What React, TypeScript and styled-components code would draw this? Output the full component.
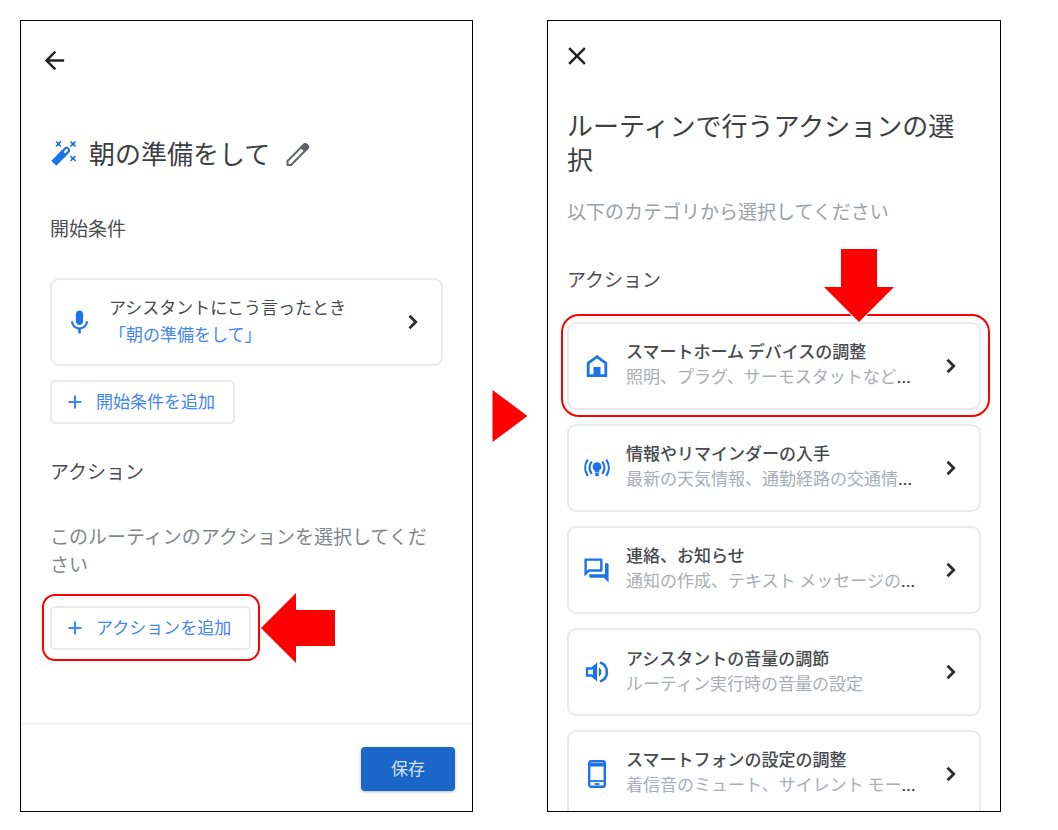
import React from "react";
import styled, { createGlobalStyle } from "styled-components";
import {
  MdArrowBack,
  MdClose,
  MdMic,
  MdOutlineForum,
} from "react-icons/md";

const GlobalStyle = createGlobalStyle`
  *, *::before, *::after { box-sizing: border-box; }
  body {
    margin: 0;
    background: #fff;
    font-family: "Noto Sans CJK JP", "Noto Sans", sans-serif;
    color: #3c4043;
  }
  h1, h2, p, ul { margin: 0; padding: 0; font-weight: 400; }
  ul { list-style: none; }
  button { font: inherit; color: inherit; cursor: pointer; }
  svg { display: block; flex: none; }
`;

const Page = styled.main`
  display: grid;
  grid-template-columns: minmax(0, 453fr) 74px minmax(0, 454fr);
  padding: 20px 57px 18px 20px;
  height: 100vh;
  min-height: 720px;
`;

const Panel = styled.section<{ $pad: string }>`
  display: flex;
  flex-direction: column;
  min-width: 0;
  min-height: 0;
  overflow: hidden;
  border: 1px solid #000;
  padding: ${(p) => p.$pad};
`;

const PanelBody = styled.div`
  padding: 0 29px;
`;

const NextStep = styled.div`
  display: flex;
  align-items: center;
  justify-content: center;
`;

const IconButton = styled.button`
  display: flex;
  align-items: center;
  justify-content: center;
  flex: none;
  width: 30px;
  height: 30px;
  padding: 0;
  border: 0;
  background: none;
  color: #202124;
`;

const BackButton = styled(IconButton)`
  margin-left: 18px;
`;

const CloseButton = styled(IconButton)`
  margin-left: -5px;
`;

const TitleRow = styled.div`
  display: flex;
  align-items: center;
  margin-top: 61px;
  color: #1a73e8;
`;

const Title = styled.h1`
  font-size: 26px;
  line-height: 34px;
  color: #3c4043;
`;

const RoutineName = styled(Title)`
  margin: 0 13px 0 11px;
`;

const PickerTitle = styled(Title)`
  margin-top: 37px;
  padding-right: 16px;
`;

const EditButton = styled(IconButton)`
  color: #5f6368;
`;

const Heading = styled.h2<{ $top: number }>`
  margin-top: ${(p) => p.$top}px;
  font-size: 19px;
  line-height: 28px;
  color: #4a4d51;
`;

const Note = styled.p<{ $top: number; $light?: boolean }>`
  margin-top: ${(p) => p.$top}px;
  font-size: 19px;
  line-height: 28px;
  color: ${(p) => (p.$light ? "#9aa0a6" : "#80868b")};
`;

const Card = styled.button`
  display: flex;
  align-items: center;
  width: 100%;
  height: 88px;
  padding: 0 21px 0 13px;
  border: 2px solid #e8eaed;
  border-radius: 9px;
  background: #fff;
  text-align: left;
  color: #1a73e8;
`;

const CardIcon = styled.span`
  display: flex;
  justify-content: center;
  flex: none;
  width: 29px;
  margin-right: 15px;
`;

const CardText = styled.span<{ $line: number }>`
  display: block;
  flex: 1;
  min-width: 0;
  padding-bottom: 4px;
  font-size: 17px;
  line-height: ${(p) => p.$line}px;
  white-space: nowrap;
`;

const CardTitle = styled.span<{ $strong?: boolean }>`
  display: block;
  font-weight: ${(p) => (p.$strong ? 500 : 400)};
  color: #474a4e;
`;

const CardPhrase = styled.span`
  display: block;
  color: #4285f4;
`;

const CardSub = styled.span`
  display: block;
  color: #a9aeb4;
`;

const Dots = styled.span`
  font-family: Roboto, sans-serif;
  font-weight: 500;
  color: #3c4043;
`;

const AddButton = styled.button`
  display: flex;
  align-items: center;
  gap: 14px;
  height: 44px;
  padding: 0 18px 0 16px;
  border: 2px solid #e8eaed;
  border-radius: 5px;
  background: #fff;
  font-size: 17px;
  color: #4285f4;
  white-space: nowrap;
`;

const ButtonLabel = styled.span`
  display: block;
  padding-bottom: 3px;
`;

const AddRow = styled.div<{ $top: number }>`
  display: flex;
  margin-top: ${(p) => p.$top}px;
`;

const Marked = styled.div`
  position: relative;
`;

const Ring = styled.span<{ $inset: string; $radius: number }>`
  position: absolute;
  inset: ${(p) => p.$inset};
  border: 2px solid #f00;
  border-radius: ${(p) => p.$radius}px;
  pointer-events: none;
`;

const LeftArrow = styled.svg`
  position: absolute;
  left: calc(100% + 8px);
  top: -16px;
`;

const DownArrow = styled.svg`
  position: absolute;
  right: 86px;
  bottom: calc(100% - 1px);
`;

const Footer = styled.footer`
  display: flex;
  justify-content: flex-end;
  margin-top: auto;
  padding: 22px 17px 20px;
  border-top: 2px solid #f3f4f5;
  box-shadow: 0 -1px 2px #f8f8f8;
`;

const SaveButton = styled.button`
  width: 94px;
  height: 44px;
  padding: 0;
  border: 0;
  border-radius: 4px;
  background: #1a66c9;
  box-shadow: 0 1px 3px #b4b8bf;
  font-size: 17px;
  color: #d3e2f8;
`;

const ActionList = styled.ul`
  display: flex;
  flex-direction: column;
  gap: 14px;
  margin-top: 29px;
`;

const Chevron = () => (
  <svg width="14" height="18" viewBox="0 0 14 18" fill="none" stroke="#2b2d30" strokeWidth="2.8" aria-hidden="true">
    <path d="M3.500 2.800 9.700 9l-6.200 6.200" />
  </svg>
);

const Plus = () => (
  <svg width="14" height="14" viewBox="0 0 14 14" fill="none" stroke="currentColor" strokeWidth="2.200" aria-hidden="true">
    <path d="M7 .5v13M.5 7h13" />
  </svg>
);

const Wand = () => (
  <svg width="28" height="28" viewBox="0 0 28 28" fill="none" stroke="currentColor" aria-hidden="true">
    <path d="M3.800 24.200 14 14" strokeWidth="7" />
    <path d="m12.500 15.500 4-4" strokeWidth="7" strokeLinecap="round" />
    <path d="m15 13 1.800-1.800" stroke="#fff" strokeWidth="2.400" strokeLinecap="round" />
    <path
      d="m6 2.500 5 5m0-5-5 5M20.500 2.500l5 5m0-5-5 5M20.500 17l5 5m0-5-5 5"
      strokeWidth="1.500"
    />
    <path d="M7 3.500h3v3H7zM21.500 3.500h3v3h-3zM21.500 18h3v3h-3z" fill="currentColor" stroke="none" />
  </svg>
);

const Pencil = () => (
  <svg width="30" height="30" viewBox="0 0 30 30" fill="none" stroke="currentColor" strokeWidth="2" strokeLinejoin="round" aria-hidden="true">
    <path d="M4.500 27v-4L20.900 6.600c.8-.8 1.800-.8 2.600 0l1 1c.8.800.8 1.800 0 2.600L8.100 27Z" />
    <path d="m18.200 9.300 2.700-2.700c.8-.8 1.800-.8 2.600 0l1 1c.8.800.8 1.800 0 2.600L21.800 12.900Z" fill="currentColor" />
  </svg>
);

const HomeIcon = () => (
  <svg width="24" height="26" viewBox="0 0 24 26" fill="none" stroke="currentColor" strokeWidth="2.800" aria-hidden="true">
    <path d="M3.200 22.700V10.200L12 3.700l8.800 6.500v12.500Z" />
    <path d="M8.500 14h7v8h-7z" fill="currentColor" stroke="none" />
  </svg>
);

const SignalBulbIcon = () => (
  <svg width="28" height="22" viewBox="0 0 28 22" fill="none" stroke="currentColor" strokeWidth="2.200" aria-hidden="true">
    <path d="M4.700 2.500c-3.300 5-3.300 11.500 0 16.500M8.700 4.500c-2.600 3.800-2.600 8.700 0 12.500M23.300 2.500c3.300 5 3.300 11.500 0 16.500M19.300 4.500c2.600 3.800 2.600 8.700 0 12.500" />
    <path d="M14 5.300a4.500 4.500 0 0 0-2.300 8.300v2h4.600v-2A4.500 4.500 0 0 0 14 5.300ZM12.300 16h3.400v3.200h-3.400Z" fill="currentColor" stroke="none" />
  </svg>
);

const SpeakerIcon = () => (
  <svg width="24" height="24" viewBox="0 0 24 24" fill="none" stroke="currentColor" aria-hidden="true">
    <path d="M2 8.500h4.800L11 5v14l-4.200-3.500H2Z" strokeWidth="2.300" />
    <path d="M8 8.800 12 5v14l-4-3.800Z" fill="currentColor" stroke="none" />
    <path d="M14 7.500c3.200 1.800 3.200 7.200 0 9Z" fill="currentColor" stroke="none" />
    <path d="M15 2.500c9.200 3 9.200 16 0 19" strokeWidth="2.500" />
  </svg>
);

const PhoneIcon = () => (
  <svg width="20" height="30" viewBox="0 0 20 30" fill="none" stroke="currentColor" aria-hidden="true">
    <rect x="2.200" y="2.300" width="15.600" height="25.400" rx="2" strokeWidth="2.400" />
    <path d="M2 5.800h16" strokeWidth="3.500" />
    <path d="M2 22h16" strokeWidth="1.800" />
    <path d="M7.500 25h5" strokeWidth="1.800" />
  </svg>
);

type Action = { title: string; sub: string; cut?: boolean; icon: React.ReactNode };

const actions: Action[] = [
  { title: "スマートホーム デバイスの調整", sub: "照明、プラグ、サーモスタットなど", cut: true, icon: <HomeIcon /> },
  { title: "情報やリマインダーの入手", sub: "最新の天気情報、通勤経路の交通情", cut: true, icon: <SignalBulbIcon /> },
  { title: "連絡、お知らせ", sub: "通知の作成、テキスト メッセージの", cut: true, icon: <MdOutlineForum size={29} /> },
  { title: "アシスタントの音量の調節", sub: "ルーティン実行時の音量の設定", icon: <SpeakerIcon /> },
  { title: "スマートフォンの設定の調整", sub: "着信音のミュート、サイレント モー", cut: true, icon: <PhoneIcon /> },
];

const ActionCard = ({ action }: { action: Action }) => (
  <Card type="button">
    <CardIcon>{action.icon}</CardIcon>
    <CardText $line={25}>
      <CardTitle $strong>{action.title}</CardTitle>
      <CardSub>
        {action.sub}
        {action.cut && <Dots>...</Dots>}
      </CardSub>
    </CardText>
    <Chevron />
  </Card>
);

export default function App() {
  return (
    <>
      <GlobalStyle />
      <Page lang="ja">
        <Panel $pad="24px 0 0">
          <BackButton type="button" aria-label="戻る">
            <MdArrowBack size={29} />
          </BackButton>
          <PanelBody>
            <TitleRow>
              <Wand />
              <RoutineName>朝の準備をして</RoutineName>
              <EditButton type="button" aria-label="名前を編集">
                <Pencil />
              </EditButton>
            </TitleRow>

            <Heading $top={44}>開始条件</Heading>
            <AddRow $top={36}>
              <Card type="button">
                <CardIcon>
                  <MdMic size={29} />
                </CardIcon>
                <CardText $line={27}>
                  <CardTitle>アシスタントにこう言ったとき</CardTitle>
                  <CardPhrase>「朝の準備をして」</CardPhrase>
                </CardText>
                <Chevron />
              </Card>
            </AddRow>
            <AddRow $top={14}>
              <AddButton type="button">
                <Plus />
                <ButtonLabel>開始条件を追加</ButtonLabel>
              </AddButton>
            </AddRow>

            <Heading $top={33}>アクション</Heading>
            <Note $top={37}>このルーティンのアクションを選択してください</Note>
            <AddRow $top={28}>
              <Marked>
                <AddButton type="button">
                  <Plus />
                  <ButtonLabel>アクションを追加</ButtonLabel>
                </AddButton>
                <Ring $inset="-12px -9px -11px -8px" $radius={13} />
                <LeftArrow width="78" height="76" viewBox="0 0 78 76" aria-hidden="true">
                  <path d="M2 38 37 3v17h39v36H37v17Z" fill="#f00" stroke="#fff" strokeWidth="2" paintOrder="stroke" />
                </LeftArrow>
              </Marked>
            </AddRow>
          </PanelBody>
          <Footer>
            <SaveButton type="button">
              <ButtonLabel>保存</ButtonLabel>
            </SaveButton>
          </Footer>
        </Panel>

        <NextStep>
          <svg width="36" height="54" viewBox="0 0 36 54" aria-hidden="true">
            <path d="M.5 1 35.500 27 .5 53Z" fill="#f00" />
          </svg>
        </NextStep>

        <Panel $pad="20px 19px 0">
          <CloseButton type="button" aria-label="閉じる">
            <MdClose size={30} />
          </CloseButton>
          <PickerTitle>ルーティンで行うアクションの選択</PickerTitle>
          <Note $top={21} $light>以下のカテゴリから選択してください</Note>
          <Heading $top={40}>アクション</Heading>
          <ActionList>
            {actions.map((action, i) => (
              <li key={action.title}>
                {i === 0 ? (
                  <Marked>
                    <ActionCard action={action} />
                    <Ring $inset="-8px -9px -7px -6px" $radius={18} />
                    <DownArrow width="72" height="76" viewBox="0 0 72 76" aria-hidden="true">
                      <path d="M36 75 1 40h17V2h36v38h17Z" fill="#f00" stroke="#fff" strokeWidth="2" paintOrder="stroke" />
                    </DownArrow>
                  </Marked>
                ) : (
                  <ActionCard action={action} />
                )}
              </li>
            ))}
          </ActionList>
        </Panel>
      </Page>
    </>
  );
}
